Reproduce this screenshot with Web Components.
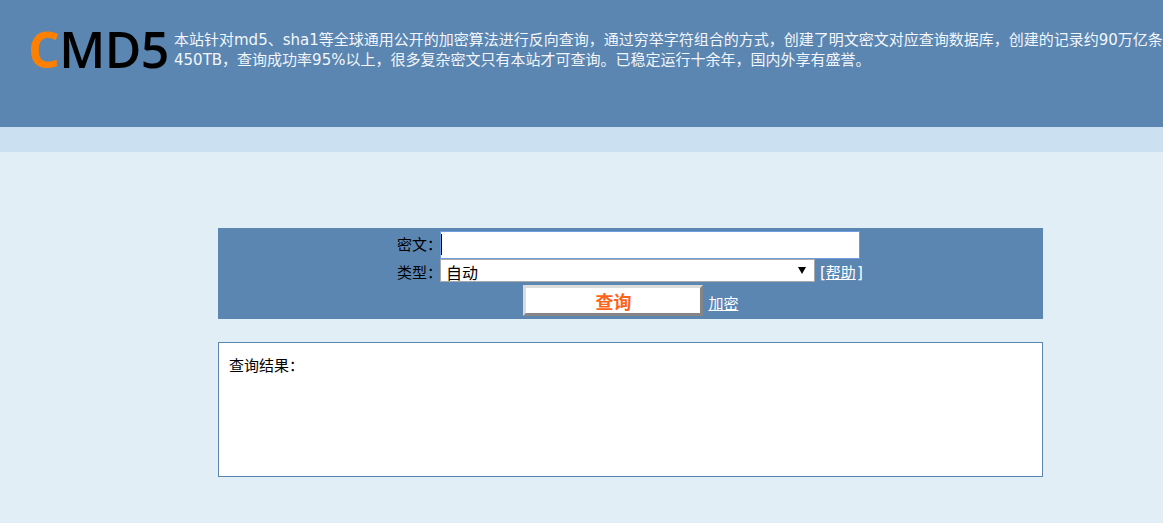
<!DOCTYPE html>
<html lang="zh-CN">
<head>
<meta charset="utf-8">
<title>CMD5</title>
<style>
    html, body {
        margin: 0;
        height: 100%;
        overflow: hidden;
        background: #e1eef6;
    }
    body {
        font-family: "DejaVu Sans", "Noto Sans CJK SC", sans-serif;
        font-size: 14px;
    }
</style>
</head>
<body>
<site-header>本站针对md5、sha1等全球通用公开的加密算法进行反向查询，通过穷举字符组合的方式，创建了明文密文对应查询数据库，创建的记录约90万亿条<br>450TB，查询成功率95%以上，很多复杂密文只有本站才可查询。已稳定运行十余年，国内外享有盛誉。</site-header>
<search-form></search-form>
<result-box>查询结果：</result-box>

<script>
class SiteHeader extends HTMLElement {
    constructor() {
        super();
        this.attachShadow({mode: "open"});
        this.shadowRoot.innerHTML = `
        <style>
            :host {
                display: block;
                color: #f2f6fa;
            }
            .topo {
                display: flex;
                height: 127px;
                padding-left: 28px;
                box-sizing: border-box;
                background: #5b86b2;
                overflow: hidden;
            }
            .logo {
                flex: none;
                width: 146px;
                margin-top: 15px;
                font: 600 50px/68px "Open Sans", sans-serif;
                color: #000;
                letter-spacing: -0.6px;
            }
            .logo span {
                color: #ff7f00;
                font-weight: 700;
            }
            .texto {
                flex: none;
                margin-top: 30px;
                font-size: 15px;
                line-height: 20px;
                white-space: nowrap;
            }
            .faixa {
                height: 25px;
                background: #cbe0f0;
            }
        </style>
        <div class="topo">
            <div class="logo"><span>C</span>MD5</div>
            <div class="texto"><slot></slot></div>
        </div>
        <div class="faixa"></div>`;
    }
}

class SearchForm extends HTMLElement {
    constructor() {
        super();
        this.attachShadow({mode: "open"});
        this.shadowRoot.innerHTML = `
        <style>
            :host {
                display: block;
                width: 825px;
                box-sizing: border-box;
                margin: 76px 0 0 218px;
                padding: 3px 0;
                background: #5b86b2;
                color: #000;
            }
            .linha {
                display: flex;
                justify-content: center;
                align-items: center;
            }
            label {
                width: 43px;
                font-size: 15px;
                white-space: nowrap;
            }
            .sobe {
                padding-bottom: 4px;
            }
            .desce {
                padding-top: 2px;
            }
            .campo {
                position: relative;
                display: block;
                width: 420px;
                height: 28px;
            }
            input {
                display: block;
                width: 100%;
                height: 100%;
                box-sizing: border-box;
                margin: 0;
                padding: 0;
                border: 1px solid #6d9ce4;
                outline: none;
                background: #fff;
            }
            .cursor {
                position: absolute;
                left: 1px;
                top: 3px;
                width: 1px;
                height: 21px;
                background: #000;
            }
            .vazio {
                width: 4px;
            }
            .caixa {
                position: relative;
                width: 375px;
                height: 23px;
            }
            select {
                display: block;
                width: 100%;
                height: 100%;
                box-sizing: border-box;
                margin: 0;
                padding: 5px 0 0 5px;
                border: 1px solid #a9a9a9;
                border-radius: 0;
                appearance: none;
                background: #fff;
                color: #000;
                font: 16px/18px "DejaVu Sans", "Noto Sans CJK SC", sans-serif;
            }
            .caixa svg {
                position: absolute;
                right: 8px;
                top: 7px;
            }
            .ajuda {
                margin-left: 5px;
                padding-top: 2px;
                width: 44px;
                font-size: 15px;
                color: #fff;
                white-space: nowrap;
            }
            .ajuda a {
                margin-right: 1px;
            }
            a {
                color: #fff;
                text-decoration: underline;
            }
            .linha-botao {
                margin-top: 3px;
                padding-left: 1px;
            }
            button {
                width: 180px;
                height: 31px;
                box-sizing: border-box;
                margin: 0;
                padding: 0;
                border: 3px solid;
                border-color: #dcdcdc #858585 #858585 #dcdcdc;
                background: #fff;
                color: #ff6319;
                font: 700 18px "DejaVu Sans", "Noto Sans CJK SC", sans-serif;
            }
            .cifrar {
                margin-left: 5px;
                padding-top: 3px;
                font-size: 15px;
            }
        </style>
        <div class="linha">
            <label class="sobe">密文：</label>
            <span class="campo"><input type="text"><span class="cursor"></span></span>
            <span class="vazio"></span>
        </div>
        <div class="linha">
            <label class="desce">类型：</label>
            <div class="caixa">
                <select><option>自动</option></select>
                <svg width="10" height="9" viewBox="0 0 10 9"><path d="M1 1H9L5 8Z" fill="#000"/></svg>
            </div>
            <span class="ajuda">[<a href="#">帮助</a>]</span>
        </div>
        <div class="linha linha-botao">
            <button type="button">查询</button>
            <a class="cifrar" href="#">加密</a>
        </div>`;
    }
}

class ResultBox extends HTMLElement {
    constructor() {
        super();
        this.attachShadow({mode: "open"});
        this.shadowRoot.innerHTML = `
        <style>
            :host {
                display: block;
                width: 825px;
                height: 135px;
                box-sizing: border-box;
                margin: 23px 0 0 218px;
                padding: 13px 10px;
                border: 1px solid #5b86b2;
                background: #fff;
                color: #000;
                font-size: 15px;
                line-height: 20px;
            }
        </style>
        <slot></slot>`;
    }
}

customElements.define("site-header", SiteHeader);
customElements.define("search-form", SearchForm);
customElements.define("result-box", ResultBox);
</script>
</body>
</html>
